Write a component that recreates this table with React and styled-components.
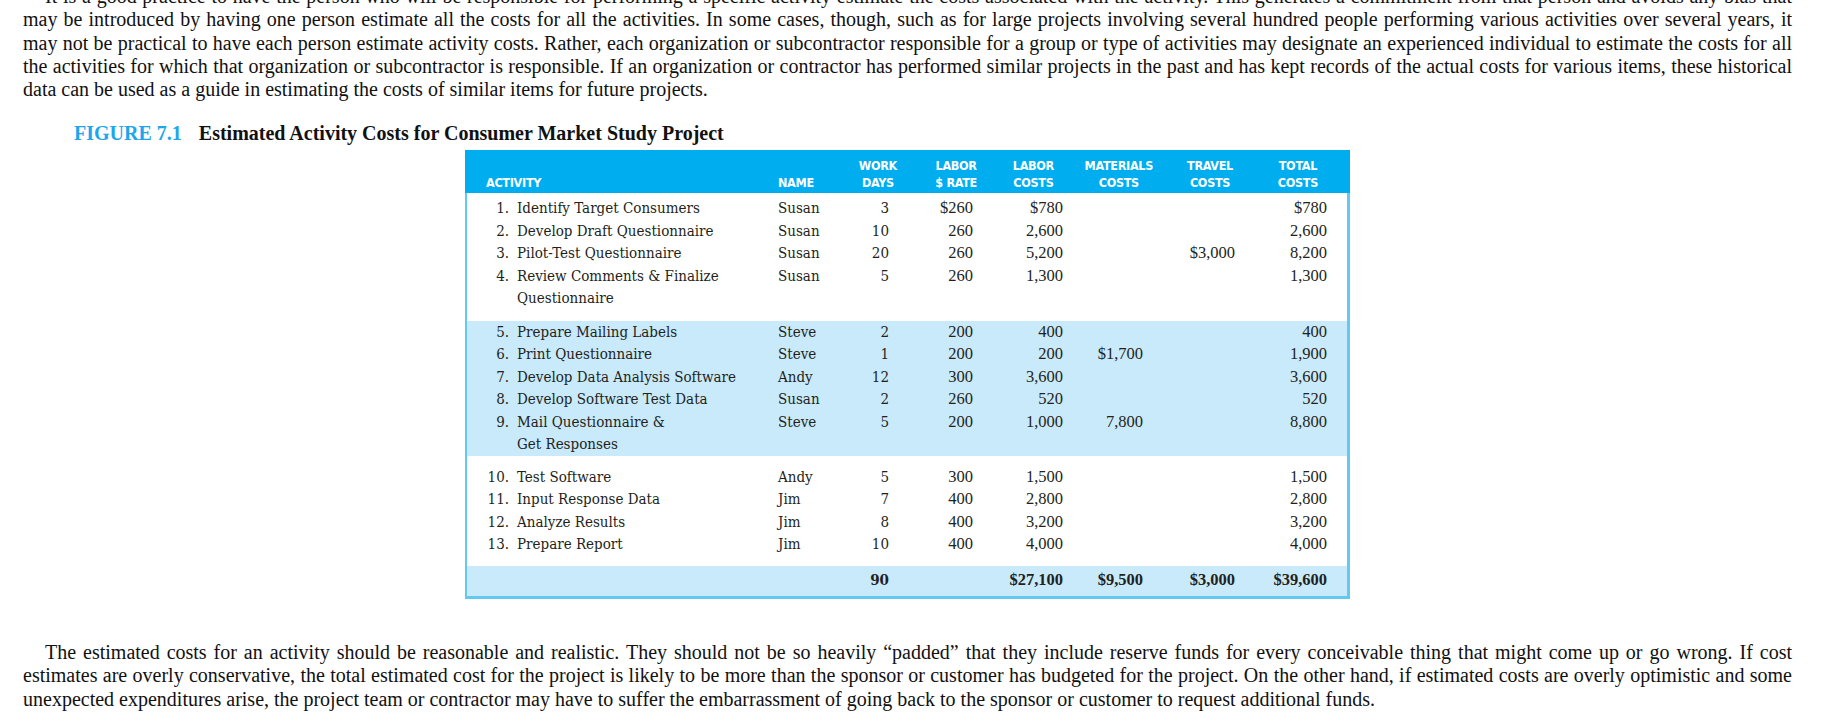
import styled, { createGlobalStyle } from "styled-components";

const GlobalStyle = createGlobalStyle`
  html, body {
    margin: 0;
    padding: 0;
    background: #fff;
  }
  body {
    font-family: "Liberation Serif", "Times New Roman", serif;
    color: #111;
    overflow: hidden;
  }
`;

const COLS = "72px 47px 80px 86px 80px 92px 92px 1fr";

const Page = styled.div`
  width: 1769px;
  margin-left: 23px;
`;

const Para = styled.div`
  font-size: 20px;
  line-height: 23.3px;
  margin-top: ${(p) => p.$top}px;
`;

// each printed line is its own block, spread to the full measure
const Line = styled.span`
  display: block;
  text-align: ${(p) => (p.$last ? "left" : "justify")};
  text-align-last: ${(p) => (p.$last ? "left" : "justify")};
  word-spacing: ${(p) => (p.$last ? 0 : -1)}px;
  padding-left: ${(p) => (p.$indent ? 22 : 0)}px;
`;

const Caption = styled.div`
  margin: 21px 0 5px 51px;
  font-size: 20px;
  line-height: 23px;
  font-weight: bold;
  color: #111;
`;

const FigNo = styled.span`
  color: #1ea6ec;
  margin-right: 17px;
`;

const Table = styled.div`
  width: 885px;
  margin: 0 auto;
`;

const Head = styled.div`
  display: grid;
  grid-template-columns: 313px ${COLS};
  align-items: end;
  height: 43px;
  box-sizing: border-box;
  padding-bottom: 2px;
  background: #00aeef;
  color: #fff;
  font-family: "Liberation Sans Narrow", "DejaVu Sans Condensed", "Liberation Sans", sans-serif;
  font-weight: bold;
  font-size: 12.5px;
  line-height: 17px;
  letter-spacing: -0.3px;
`;

const HeadCell = styled.div`
  text-align: ${(p) => (p.$left ? "left" : "center")};
  justify-self: ${(p) => (p.$left ? "start" : "end")};
  margin-right: ${(p) => p.$mr || 0}px;
  padding-left: ${(p) => p.$pl || 0}px;
`;

const Body = styled.div`
  border: 0 solid #62c9f3;
  border-width: 0 3px 3px 2px;
`;

const Section = styled.div`
  background: ${(p) => (p.$tint ? "#c9eafb" : "#fff")};
  padding: ${(p) => p.$pad};
`;

const Row = styled.div`
  display: grid;
  grid-template-columns: 311px ${COLS};
  line-height: 22.5px;
  color: #231f20;
`;

const Activity = styled.div`
  display: grid;
  grid-template-columns: 23px 1fr;
  column-gap: 8px;
  padding-left: 19px;
  font-family: "DejaVu Serif", serif;
  font-stretch: condensed;
  font-size: 15px;
`;

const Num = styled.span`
  text-align: right;
`;

const Name = styled.div`
  font-family: "DejaVu Serif", serif;
  font-stretch: condensed;
  font-size: 15px;
`;

const Days = styled.div`
  text-align: right;
  padding-right: 8px;
  font-family: "DejaVu Serif", serif;
  font-stretch: condensed;
  font-size: 15px;
  font-weight: ${(p) => (p.$bold ? "bold" : "normal")};
`;

const Money = styled.div`
  text-align: right;
  padding-right: ${(p) => p.$pr || 0}px;
  font-family: "Liberation Serif", "Times New Roman", serif;
  font-size: 16.5px;
  font-weight: ${(p) => (p.$bold ? "bold" : "normal")};
`;

const top = [
  "It is a good practice to have the person who will be responsible for performing a specific activity estimate the costs associated with the activity. This generates a commitment from that person and avoids any bias that",
  "may be introduced by having one person estimate all the costs for all the activities. In some cases, though, such as for large projects involving several hundred people performing various activities over several years, it",
  "may not be practical to have each person estimate activity costs. Rather, each organization or subcontractor responsible for a group or type of activities may designate an experienced individual to estimate the costs for all",
  "the activities for which that organization or subcontractor is responsible. If an organization or contractor has performed similar projects in the past and has kept records of the actual costs for various items, these historical",
  "data can be used as a guide in estimating the costs of similar items for future projects.",
];

const bottom = [
  "The estimated costs for an activity should be reasonable and realistic. They should not be so heavily \u201cpadded\u201d that they include reserve funds for every conceivable thing that might come up or go wrong. If cost",
  "estimates are overly conservative, the total estimated cost for the project is likely to be more than the sponsor or customer has budgeted for the project. On the other hand, if estimated costs are overly optimistic and some",
  "unexpected expenditures arise, the project team or contractor may have to suffer the embarrassment of going back to the sponsor or customer to request additional funds.",
];

const sections = [
  {
    tint: false,
    pad: "4px 0 11px",
    rows: [
      ["1.", ["Identify Target Consumers"], "Susan", "3", "$260", "$780", "", "", "$780"],
      ["2.", ["Develop Draft Questionnaire"], "Susan", "10", "260", "2,600", "", "", "2,600"],
      ["3.", ["Pilot-Test Questionnaire"], "Susan", "20", "260", "5,200", "", "$3,000", "8,200"],
      ["4.", ["Review Comments & Finalize", "Questionnaire"], "Susan", "5", "260", "1,300", "", "", "1,300"],
    ],
  },
  {
    tint: true,
    pad: "0",
    rows: [
      ["5.", ["Prepare Mailing Labels"], "Steve", "2", "200", "400", "", "", "400"],
      ["6.", ["Print Questionnaire"], "Steve", "1", "200", "200", "$1,700", "", "1,900"],
      ["7.", ["Develop Data Analysis Software"], "Andy", "12", "300", "3,600", "", "", "3,600"],
      ["8.", ["Develop Software Test Data"], "Susan", "2", "260", "520", "", "", "520"],
      ["9.", ["Mail Questionnaire &", "Get Responses"], "Steve", "5", "200", "1,000", "7,800", "", "8,800"],
    ],
  },
  {
    tint: false,
    pad: "10px 0",
    rows: [
      ["10.", ["Test Software"], "Andy", "5", "300", "1,500", "", "", "1,500"],
      ["11.", ["Input Response Data"], "Jim", "7", "400", "2,800", "", "", "2,800"],
      ["12.", ["Analyze Results"], "Jim", "8", "400", "3,200", "", "", "3,200"],
      ["13.", ["Prepare Report"], "Jim", "10", "400", "4,000", "", "", "4,000"],
    ],
  },
];

const TableRow = ({ row }) => {
  const [num, title, name, days, rate, labor, mat, travel, total] = row;
  return (
    <Row>
      <Activity>
        <Num>{num}</Num>
        <span>
          {title.map((t, i) => (
            <span key={i}>
              {i > 0 && <br />}
              {t}
            </span>
          ))}
        </span>
      </Activity>
      <Name>{name}</Name>
      <Days>{days}</Days>
      <Money $pr={4}>{rate}</Money>
      <Money>{labor}</Money>
      <Money>{mat}</Money>
      <Money>{travel}</Money>
      <Money>{total}</Money>
      <div />
    </Row>
  );
};

const App = () => {
  return (
    <>
      <GlobalStyle />
      <Page>
        <Para $top={-15}>
          {top.map((l, i) => (
            <Line key={i} $indent={i === 0} $last={i === top.length - 1}>
              {l}
            </Line>
          ))}
        </Para>

        <Caption>
          <FigNo>FIGURE 7.1</FigNo>
          Estimated Activity Costs for Consumer Market Study Project
        </Caption>

        <Table>
          <Head>
            <HeadCell $left $pl={21}>ACTIVITY</HeadCell>
            <HeadCell $left>NAME</HeadCell>
            <HeadCell>WORK<br />DAYS</HeadCell>
            <HeadCell>LABOR<br />$ RATE</HeadCell>
            <HeadCell $mr={9}>LABOR<br />COSTS</HeadCell>
            <HeadCell $mr={-10}>MATERIALS<br />COSTS</HeadCell>
            <HeadCell $mr={2}>TRAVEL<br />COSTS</HeadCell>
            <HeadCell $mr={9}>TOTAL<br />COSTS</HeadCell>
            <div />
          </Head>
          <Body>
            {sections.map((s, i) => (
              <Section key={i} $tint={s.tint} $pad={s.pad}>
                {s.rows.map((r) => (
                  <TableRow key={r[0]} row={r} />
                ))}
              </Section>
            ))}
            <Section $tint $pad="3px 0 4.5px">
              <Row>
                <div />
                <div />
                <Days $bold>90</Days>
                <div />
                <Money $bold>$27,100</Money>
                <Money $bold>$9,500</Money>
                <Money $bold>$3,000</Money>
                <Money $bold>$39,600</Money>
                <div />
              </Row>
            </Section>
          </Body>
        </Table>

        <Para $top={42}>
          {bottom.map((l, i) => (
            <Line key={i} $indent={i === 0} $last={i === bottom.length - 1}>
              {l}
            </Line>
          ))}
        </Para>
      </Page>
    </>
  );
};

export default App;
